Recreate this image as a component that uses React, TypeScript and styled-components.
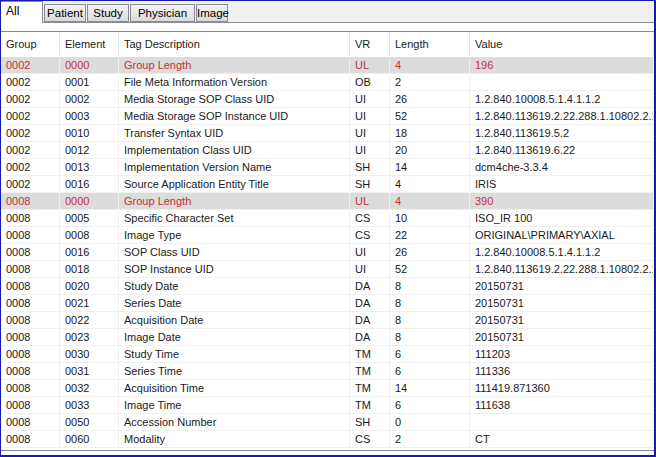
import styled, { createGlobalStyle } from 'styled-components';

const GlobalStyle = createGlobalStyle`
    body {
        margin: 0;
        font-family: "Liberation Sans", Arial, sans-serif;
        font-size: 11px;
        color: #000;
    }
`;

const Window = styled.div`
    width: 656px;
    height: 457px;
    box-sizing: border-box;
    border: 1px solid #1a1aa8;
    border-right-width: 2px;
    border-bottom-width: 2px;
    background: #fff;
    display: flex;
    flex-direction: column;
    overflow: hidden;
`;

const TabStrip = styled.div`
    height: 21px;
    display: flex;
    align-items: flex-end;
    background: #f0f0f0;
    border-bottom: 1px solid #898c95;
    flex-shrink: 0;
`;

const Tab = styled.div<{ $active?: boolean; $width: number }>`
    width: ${p => p.$width}px;
    box-sizing: border-box;
    height: ${p => (p.$active ? 22 : 18)}px;
    margin-bottom: ${p => (p.$active ? -1 : 0)}px;
    margin-left: ${p => (p.$active ? 0 : 1)}px;
    padding: ${p => (p.$active ? '2px 0 0 5px' : '2px 0 0 0')};
    text-align: ${p => (p.$active ? 'left' : 'center')};
    background: ${p => (p.$active ? '#fff' : 'linear-gradient(#f3f3f3, #e8e8e8 50%, #dadada)')};
    border: 1px solid #898c95;
    border-bottom: ${p => (p.$active ? 'none' : '1px solid #898c95')};
    border-left: ${p => (p.$active ? 'none' : '1px solid #898c95')};
    white-space: nowrap;
    font-size: ${p => (p.$active ? 12 : 11.5)}px;
`;

const Panel = styled.div`
    flex: 1;
    padding: 8px 0 4px 0;
    display: flex;
    flex-direction: column;
    min-height: 0;
`;

const ListView = styled.div`
    flex: 1;
    border-top: 1px solid #828790;
    border-bottom: 1px solid #828790;
    overflow: hidden;
`;

const Row = styled.div<{ $head?: boolean; $group?: boolean }>`
    display: grid;
    grid-template-columns: 59px 59px 231px 40px 80px 1fr;
    height: ${p => (p.$head ? 25 : 17)}px;
    background: ${p => (p.$group ? '#dcdcdc' : '#fff')};
    color: ${p => (p.$group ? '#c4303a' : '#1a1a1a')};
    border-bottom: ${p => (p.$head ? 'none' : '1px solid #f0f0f0')};
    box-sizing: border-box;
`;

const Cell = styled.div<{ $head?: boolean }>`
    padding-left: 5px;
    line-height: ${p => (p.$head ? 25 : 16)}px;
    white-space: nowrap;
    overflow: hidden;
    border-right: 1px solid ${p => (p.$head ? '#e5e5e5' : '#f0f0f0')};
    font-size: 11px;
`;

const tabs = [
    { name: 'All', width: 42, active: true },
    { name: 'Patient', width: 42 },
    { name: 'Study', width: 42 },
    { name: 'Physician', width: 65 },
    { name: 'Image', width: 32 },
];

const columns = ['Group', 'Element', 'Tag Description', 'VR', 'Length', 'Value'];

const rows: string[][] = [
    ['0002', '0000', 'Group Length', 'UL', '4', '196'],
    ['0002', '0001', 'File Meta Information Version', 'OB', '2', ''],
    ['0002', '0002', 'Media Storage SOP Class UID', 'UI', '26', '1.2.840.10008.5.1.4.1.1.2'],
    ['0002', '0003', 'Media Storage SOP Instance UID', 'UI', '52', '1.2.840.113619.2.22.288.1.10802.2.1'],
    ['0002', '0010', 'Transfer Syntax UID', 'UI', '18', '1.2.840.113619.5.2'],
    ['0002', '0012', 'Implementation Class UID', 'UI', '20', '1.2.840.113619.6.22'],
    ['0002', '0013', 'Implementation Version Name', 'SH', '14', 'dcm4che-3.3.4'],
    ['0002', '0016', 'Source Application Entity Title', 'SH', '4', 'IRIS'],
    ['0008', '0000', 'Group Length', 'UL', '4', '390'],
    ['0008', '0005', 'Specific Character Set', 'CS', '10', 'ISO_IR 100'],
    ['0008', '0008', 'Image Type', 'CS', '22', 'ORIGINAL\\PRIMARY\\AXIAL'],
    ['0008', '0016', 'SOP Class UID', 'UI', '26', '1.2.840.10008.5.1.4.1.1.2'],
    ['0008', '0018', 'SOP Instance UID', 'UI', '52', '1.2.840.113619.2.22.288.1.10802.2.1'],
    ['0008', '0020', 'Study Date', 'DA', '8', '20150731'],
    ['0008', '0021', 'Series Date', 'DA', '8', '20150731'],
    ['0008', '0022', 'Acquisition Date', 'DA', '8', '20150731'],
    ['0008', '0023', 'Image Date', 'DA', '8', '20150731'],
    ['0008', '0030', 'Study Time', 'TM', '6', '111203'],
    ['0008', '0031', 'Series Time', 'TM', '6', '111336'],
    ['0008', '0032', 'Acquisition Time', 'TM', '14', '111419.871360'],
    ['0008', '0033', 'Image Time', 'TM', '6', '111638'],
    ['0008', '0050', 'Accession Number', 'SH', '0', ''],
    ['0008', '0060', 'Modality', 'CS', '2', 'CT'],
];

export default function App() {
    return (
        <>
            <GlobalStyle />
            <Window>
                <TabStrip>
                    {tabs.map(t => (
                        <Tab key={t.name} $active={t.active} $width={t.width}>{t.name}</Tab>
                    ))}
                </TabStrip>
                <Panel>
                    <ListView>
                        <Row $head>
                            {columns.map(c => <Cell key={c} $head>{c}</Cell>)}
                        </Row>
                        {rows.map((r, i) => (
                            <Row key={i} $group={r[1] === '0000'}>
                                {r.map((v, j) => <Cell key={j}>{v}</Cell>)}
                            </Row>
                        ))}
                        <Row />
                    </ListView>
                </Panel>
            </Window>
        </>
    );
}
